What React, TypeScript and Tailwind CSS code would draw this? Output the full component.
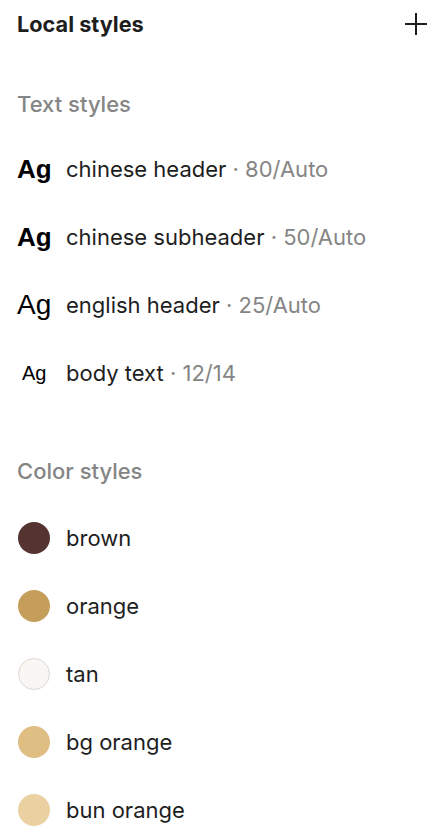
const textStyles = [
  { name: "chinese header", meta: "80/Auto", sample: "font-bold text-[26px]" },
  { name: "chinese subheader", meta: "50/Auto", sample: "font-bold text-[26px]" },
  { name: "english header", meta: "25/Auto", sample: "font-normal text-[28px]" },
  { name: "body text", meta: "12/14", sample: "font-normal text-[20px] pl-[5px]" },
];

const colorStyles = [
  { name: "brown", swatch: "bg-[#553330]" },
  { name: "orange", swatch: "bg-[#c69e5b]" },
  { name: "tan", swatch: "bg-[#f9f6f3] border border-[#dcdad8]" },
  { name: "bg orange", swatch: "bg-[#dfbe84]" },
  { name: "bun orange", swatch: "bg-[#ebd1a2]" },
];

export default function App() {
  return (
    <div className="w-[434px] h-[838px] overflow-hidden bg-white font-['Inter',sans-serif] text-[#1e1e1e]">
      <div className="h-12 flex items-center justify-between pl-[17px] pr-[7px]">
        <h1 className="text-[21.7px] font-bold pt-[1px]">Local styles</h1>
        <svg width="22" height="22" viewBox="0 0 22 22" className="text-[#1e1e1e]">
          <path d="M11 0v22M0 11h22" stroke="currentColor" strokeWidth="2" />
        </svg>
      </div>

      <div className="pt-10 pb-[15px] pl-[17px]">
        <h2 className="h-8 leading-8 text-[22px] font-medium text-[#858585]">Text styles</h2>
      </div>

      <ul>
        {textStyles.map((s) => (
          <li key={s.name} className="h-[68px] flex items-center pl-[17px]">
            <span className={`w-[49px] font-['Liberation_Sans',Arial,sans-serif] text-black ${s.sample}`}>Ag</span>
            <span className="text-[22px]">
              {s.name}
              <span className="text-[#858585]"> · {s.meta}</span>
            </span>
          </li>
        ))}
      </ul>

      <div className="pt-12 pb-[17px] pl-[17px]">
        <h2 className="h-8 leading-8 text-[22px] font-medium text-[#858585]">Color styles</h2>
      </div>

      <ul>
        {colorStyles.map((c) => (
          <li key={c.name} className="h-[68px] flex items-center pl-[18px]">
            <span className={`w-8 h-8 rounded-full shrink-0 ${c.swatch}`} />
            <span className="ml-4 text-[22px]">{c.name}</span>
          </li>
        ))}
      </ul>
    </div>
  );
}
